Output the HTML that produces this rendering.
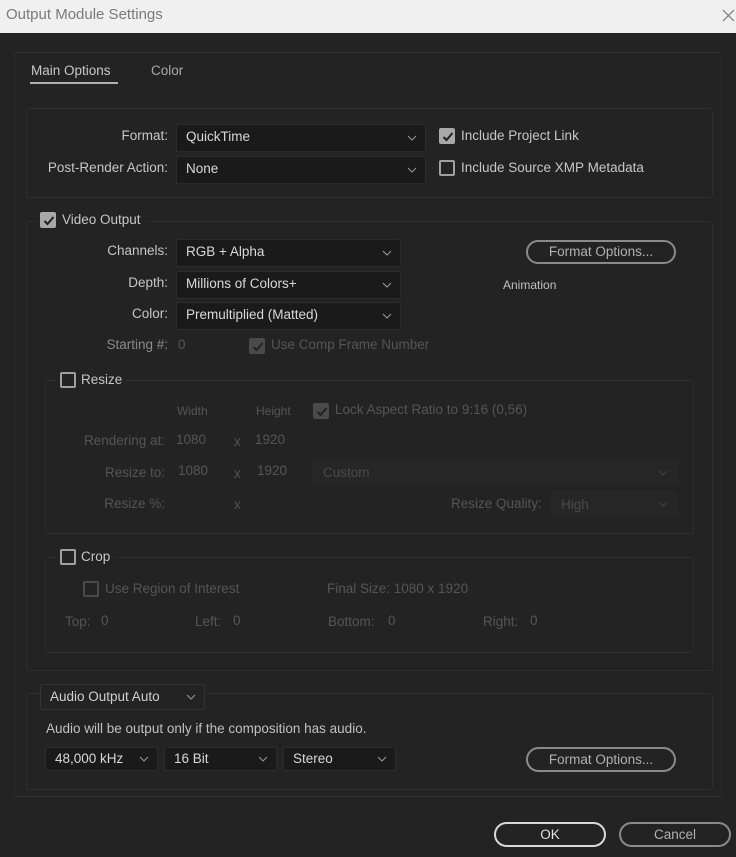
<!DOCTYPE html>
<html><head><style>
*{box-sizing:border-box;margin:0;padding:0}
body{width:736px;height:857px;background:#232323;font-family:"Liberation Sans",sans-serif;font-size:13.5px;color:#c6c6c6;position:relative;overflow:hidden}
.a{position:absolute;white-space:nowrap}
.r{text-align:right}
.box{position:absolute;border:1px solid #2e2e2e;border-radius:3px}
.dd{position:absolute;background:#1a1a1a;border:1px solid #2c2c2c;border-radius:2px;color:#d8d8d8;padding-left:9px;line-height:24px;height:28px}
.dd svg{position:absolute;right:8px;top:10px}
.dd.dis{background:#262626;color:#4a4a4a;border-color:#282828}
.cb{position:absolute;width:16px;height:16px;border:2px solid #a0a0a0;border-radius:2px}
.cb.on{background:#a8a8a8;border-color:#a8a8a8}
.cb.on.dis{background:#4a4a4a;border-color:#4a4a4a}
.cb svg{position:absolute;left:1px;top:1px}
.d{color:#555}
.btn{position:absolute;border:2px solid #8a8a8a;border-radius:14px;text-align:center;color:#b0b0b0}
.leg{position:absolute;background:#232323;padding:0 8px 0 4px}
</style></head><body>
<div class="a" style="left:0;top:0;width:736px;height:33px;background:#f0f0f0"></div>
<div class="a" style="left:6px;top:6px;color:#7a7a7a;font-size:15px">Output Module Settings</div>
<svg class="a" style="left:722px;top:9px" width="13" height="13"><path d="M1 1L12 12M12 1L1 12" stroke="#777" stroke-width="1.2"/></svg>

<div class="box" style="left:14px;top:52px;width:708px;height:745px"></div>
<div class="a" style="left:31px;top:63px;color:#c8c8c8">Main Options</div>
<div class="a" style="left:30px;top:82px;width:88px;height:2px;background:#b0b0b0"></div>
<div class="a" style="left:151px;top:63px;color:#a8a8a8">Color</div>

<div class="box" style="left:26px;top:108px;width:687px;height:90px"></div>
<div class="a r" style="left:40px;width:128px;top:128px">Format:</div>
<div class="dd" style="left:176px;top:124px;width:250px">QuickTime<svg width="10" height="6"><path d="M1 1l4 4 4-4" stroke="#999" fill="none"/></svg></div>
<div class="a r" style="left:30px;width:138px;top:160px">Post-Render Action:</div>
<div class="dd" style="left:176px;top:156px;width:250px">None<svg width="10" height="6"><path d="M1 1l4 4 4-4" stroke="#999" fill="none"/></svg></div>
<div class="cb on" style="left:439px;top:128px"><svg width="12" height="12"><path d="M1.5 6l3 3 6-7" stroke="#222" stroke-width="2" fill="none"/></svg></div>
<div class="a" style="left:461px;top:128px">Include Project Link</div>
<div class="cb" style="left:439px;top:160px"></div>
<div class="a" style="left:461px;top:160px">Include Source XMP Metadata</div>

<div class="box" style="left:26px;top:221px;width:687px;height:450px"></div>
<div class="leg" style="left:36px;top:211px;height:20px;width:112px"></div>
<div class="cb on" style="left:40px;top:212px"><svg width="12" height="12"><path d="M1.5 6l3 3 6-7" stroke="#222" stroke-width="2" fill="none"/></svg></div>
<div class="a" style="left:62px;top:212px">Video Output</div>
<div class="a r" style="left:60px;width:108px;top:243px">Channels:</div>
<div class="dd" style="left:176px;top:239px;width:225px">RGB + Alpha<svg width="10" height="6"><path d="M1 1l4 4 4-4" stroke="#999" fill="none"/></svg></div>
<div class="a r" style="left:60px;width:108px;top:275px">Depth:</div>
<div class="dd" style="left:176px;top:271px;width:225px">Millions of Colors+<svg width="10" height="6"><path d="M1 1l4 4 4-4" stroke="#999" fill="none"/></svg></div>
<div class="a r" style="left:60px;width:108px;top:306px">Color:</div>
<div class="dd" style="left:176px;top:302px;width:225px">Premultiplied (Matted)<svg width="10" height="6"><path d="M1 1l4 4 4-4" stroke="#999" fill="none"/></svg></div>
<div class="a r" style="left:60px;width:108px;top:337px;color:#8a8a8a">Starting #:</div>
<div class="a d" style="left:178px;top:337px">0</div>
<div class="cb on dis" style="left:249px;top:338px"><svg width="12" height="12"><path d="M1.5 6l3 3 6-7" stroke="#222" stroke-width="2" fill="none"/></svg></div>
<div class="a d" style="left:271px;top:337px">Use Comp Frame Number</div>
<div class="btn" style="left:526px;top:240px;width:150px;height:24px;line-height:20px">Format Options...</div>
<div class="a" style="left:503px;top:278px;font-size:12px;color:#c0c0c0">Animation</div>

<div class="box" style="left:45px;top:380px;width:649px;height:154px"></div>
<div class="leg" style="left:56px;top:370px;height:20px;width:70px"></div>
<div class="cb" style="left:60px;top:372px"></div>
<div class="a" style="left:81px;top:372px">Resize</div>
<div class="a d" style="left:177px;top:404px;font-size:12px">Width</div>
<div class="a d" style="left:256px;top:404px;font-size:12px">Height</div>
<div class="cb on dis" style="left:313px;top:403px"><svg width="12" height="12"><path d="M1.5 6l3 3 6-7" stroke="#222" stroke-width="2" fill="none"/></svg></div>
<div class="a d" style="left:335px;top:402px">Lock Aspect Ratio to 9:16 (0,56)</div>
<div class="a d r" style="left:60px;width:105px;top:433px">Rendering at:</div>
<div class="a d" style="left:176px;top:432px">1080</div><div class="a d" style="left:234px;top:434px">x</div><div class="a d" style="left:255px;top:432px">1920</div>
<div class="a d r" style="left:60px;width:105px;top:465px">Resize to:</div>
<div class="a d" style="left:178px;top:463px">1080</div><div class="a d" style="left:234px;top:466px">x</div><div class="a d" style="left:257px;top:463px">1920</div>
<div class="dd dis" style="left:313px;top:460px;width:364px;height:24px;line-height:24px">Custom<svg width="10" height="6" style="top:9px"><path d="M1 1l4 4 4-4" stroke="#444" fill="none"/></svg></div>
<div class="a d r" style="left:60px;width:105px;top:496px">Resize %:</div>
<div class="a d" style="left:234px;top:497px">x</div>
<div class="a d" style="left:451px;top:496px">Resize Quality:</div>
<div class="dd dis" style="left:551px;top:491px;width:126px;height:25px;line-height:25px">High<svg width="10" height="6" style="top:9px"><path d="M1 1l4 4 4-4" stroke="#444" fill="none"/></svg></div>

<div class="box" style="left:45px;top:557px;width:649px;height:96px"></div>
<div class="leg" style="left:56px;top:547px;height:20px;width:60px"></div>
<div class="cb" style="left:60px;top:549px"></div>
<div class="a" style="left:81px;top:549px">Crop</div>
<div class="cb" style="left:83px;top:581px;border-color:#4a4a4a"></div>
<div class="a d" style="left:105px;top:581px">Use Region of Interest</div>
<div class="a d" style="left:327px;top:581px">Final Size: 1080 x 1920</div>
<div class="a d" style="left:65px;top:614px">Top:</div><div class="a d" style="left:101px;top:613px">0</div>
<div class="a d" style="left:195px;top:614px">Left:</div><div class="a d" style="left:233px;top:613px">0</div>
<div class="a d" style="left:328px;top:614px">Bottom:</div><div class="a d" style="left:388px;top:613px">0</div>
<div class="a d" style="left:483px;top:614px">Right:</div><div class="a d" style="left:530px;top:613px">0</div>

<div class="box" style="left:26px;top:693px;width:687px;height:97px"></div>
<div class="dd" style="left:40px;top:684px;width:165px;height:26px;line-height:24px;background:#232323;border-color:#333;color:#d0d0d0">Audio Output Auto<svg width="10" height="6" style="top:9px"><path d="M1 1l4 4 4-4" stroke="#999" fill="none"/></svg></div>
<div class="a" style="left:46px;top:721px;color:#c0c0c0">Audio will be output only if the composition has audio.</div>
<div class="dd" style="left:45px;top:747px;width:113px;height:24px;line-height:22px">48,000 kHz<svg width="10" height="6" style="top:8px"><path d="M1 1l4 4 4-4" stroke="#999" fill="none"/></svg></div>
<div class="dd" style="left:164px;top:747px;width:113px;height:24px;line-height:22px">16 Bit<svg width="10" height="6" style="top:8px"><path d="M1 1l4 4 4-4" stroke="#999" fill="none"/></svg></div>
<div class="dd" style="left:283px;top:747px;width:113px;height:24px;line-height:22px">Stereo<svg width="10" height="6" style="top:8px"><path d="M1 1l4 4 4-4" stroke="#999" fill="none"/></svg></div>
<div class="btn" style="left:526px;top:747px;width:150px;height:25px;line-height:21px">Format Options...</div>

<div class="btn" style="left:494px;top:822px;width:112px;height:25px;line-height:21px;border-color:#d8d8d8;color:#e0e0e0">OK</div>
<div class="btn" style="left:619px;top:822px;width:112px;height:25px;line-height:21px">Cancel</div>
</body></html>
